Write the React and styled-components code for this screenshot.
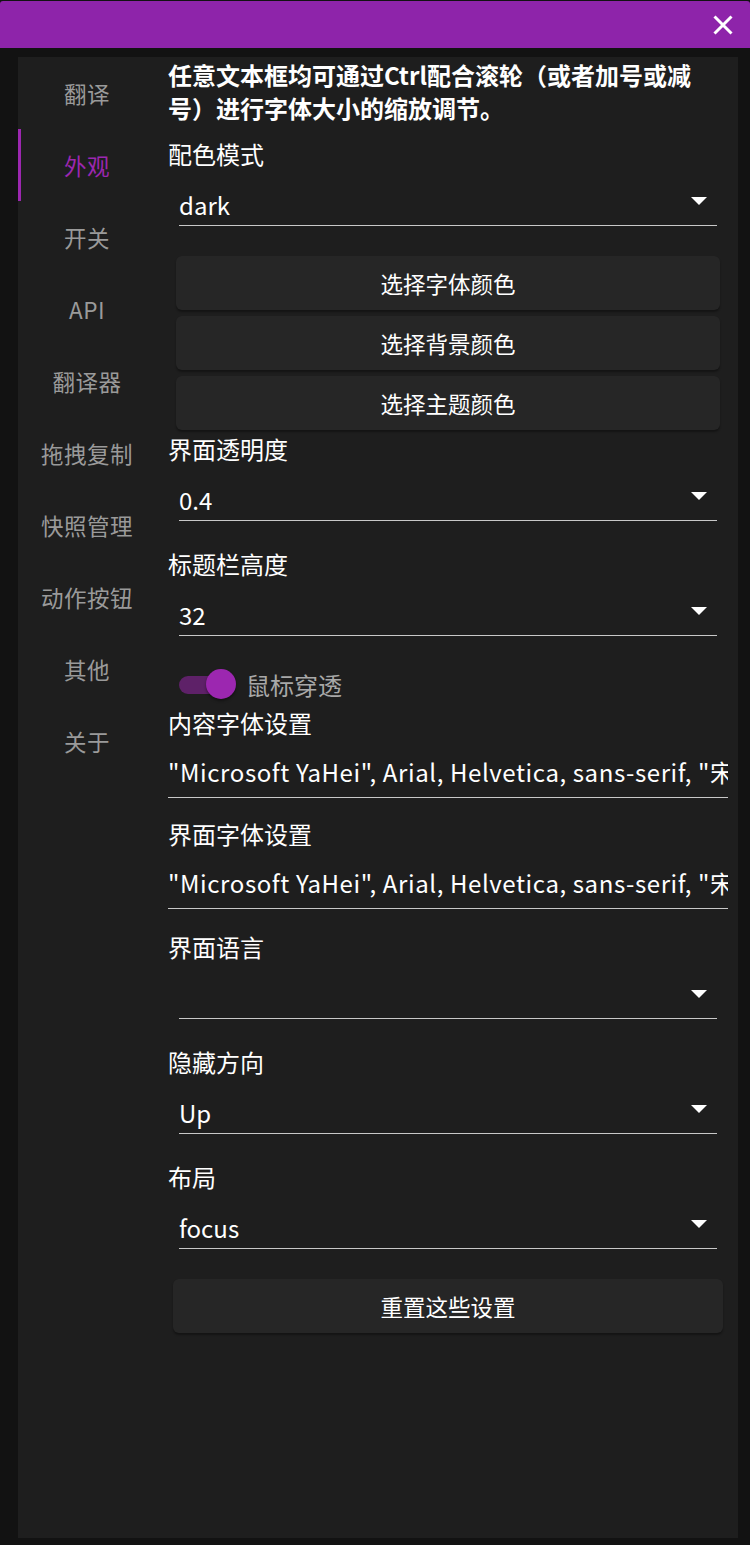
import React from "react"
import styled, { createGlobalStyle } from "styled-components"

const GlobalStyle = createGlobalStyle`
  html, body {
    margin: 0;
    padding: 0;
    background: #121212;
  }
  body {
    font-family: "Noto Sans CJK SC", "Noto Sans", sans-serif;
    color: #fff;
  }
`

const Page = styled.div`
  display: flex;
  flex-direction: column;
  min-height: 100vh;
  box-sizing: border-box;
  padding-bottom: 7px;
`

const TitleBar = styled.div`
  height: 47px;
  margin-top: 1px;
  background: #8e24aa;
  border-radius: 3px 3px 0 0;
  display: flex;
  align-items: center;
  justify-content: flex-end;
  padding-right: 17px;
`

const CloseButton = styled.div`
  width: 20px;
  height: 20px;
  display: flex;
  cursor: pointer;
`

const Panel = styled.div`
  flex: 1;
  display: flex;
  margin: 9px 12px 0 18px;
  background: #1e1e1e;
`

const Sidebar = styled.nav`
  width: 138px;
  flex-shrink: 0;
  display: flex;
  flex-direction: column;
`

const NavItem = styled.div`
  height: 72px;
  display: flex;
  align-items: center;
  justify-content: center;
  font-size: 22.5px;
  letter-spacing: 0.5px;
  color: ${(p) => (p.$active ? "#9c27b0" : "#9a9a9a")};
  border-left: 3px solid ${(p) => (p.$active ? "#9c27b0" : "transparent")};
  padding-right: 3px;
`

const Content = styled.div`
  flex: 1;
  min-width: 0;
  display: flex;
  flex-direction: column;
  padding: 1px 10px 0 12px;
`

const Heading = styled.div`
  font-size: 24px;
  font-weight: 700;
  line-height: 33px;
`

const Label = styled.div`
  font-size: 24px;
  line-height: 36px;
  margin-top: ${(p) => p.$top}px;
`

const Select = styled.div`
  margin: 15px 11px 0;
  display: flex;
  align-items: center;
  justify-content: space-between;
  padding-bottom: 2px;
  border-bottom: 1px solid #c8c8c8;
`

const SelectValue = styled.span`
  font-size: 24px;
  line-height: 36px;
  height: 36px;
`

const Arrow = styled.svg`
  width: 16px;
  height: 8px;
  margin: 0 10px 8px 0;
`

const ButtonStack = styled.div`
  display: flex;
  flex-direction: column;
  gap: 6px;
  margin: 30px ${(p) => p.$inset}px 0;
`

const Button = styled.div`
  height: 54px;
  border-radius: 6px;
  background: #262626;
  box-shadow: 0 2px 2px rgba(0, 0, 0, 0.35);
  display: flex;
  align-items: center;
  justify-content: center;
  font-size: 22.5px;
  color: #fff;
`

const ToggleRow = styled.div`
  display: flex;
  align-items: center;
  height: 36px;
  margin: 30px 0 0 11px;
  gap: 10px;
`

const Switch = styled.div`
  position: relative;
  width: 57px;
  height: 30px;
`

const Track = styled.div`
  position: absolute;
  left: 0;
  top: 7px;
  width: 46px;
  height: 18px;
  border-radius: 9px;
  background: #5e2168;
`

const Knob = styled.div`
  position: absolute;
  left: 27px;
  top: 0;
  width: 30px;
  height: 30px;
  border-radius: 50%;
  background: #9c27b0;
  box-shadow: 0 2px 3px rgba(0, 0, 0, 0.4);
`

const ToggleText = styled.span`
  font-size: 24px;
  color: #a8a8a8;
`

const TextInput = styled.input`
  display: block;
  width: 100%;
  box-sizing: border-box;
  margin: 12px 0 0;
  padding: 0 0 8px;
  border: none;
  border-bottom: 1px solid #c8c8c8;
  background: transparent;
  outline: none;
  color: #fff;
  font-family: "Noto Sans CJK SC", "Noto Sans", sans-serif;
  font-size: 24px;
  letter-spacing: 0.6px;
  line-height: 36px;
  height: 45px;
`

const navItems = ["翻译", "外观", "开关", "API", "翻译器", "拖拽复制", "快照管理", "动作按钮", "其他", "关于"]

const fontStack = `"Microsoft YaHei", Arial, Helvetica, sans-serif, "宋体"`

function DropArrow() {
  return (
    <Arrow viewBox="0 0 16 8">
      <path d="M0 0h16L8 8z" fill="#fff" />
    </Arrow>
  )
}

function SelectField({ value }) {
  return (
    <Select>
      <SelectValue>{value}</SelectValue>
      <DropArrow />
    </Select>
  )
}

export default function App() {
  return (
    <Page>
      <GlobalStyle />
      <TitleBar>
        <CloseButton>
          <svg width="20" height="20" viewBox="0 0 20 20">
            <path d="M1.5 1.5l17 17M18.5 1.5l-17 17" stroke="#fff" strokeWidth="3" />
          </svg>
        </CloseButton>
      </TitleBar>
      <Panel>
        <Sidebar>
          {navItems.map((item, i) => (
            <NavItem key={item} $active={i === 1}>
              {item}
            </NavItem>
          ))}
        </Sidebar>
        <Content>
          <Heading>
            任意文本框均可通过Ctrl配合滚轮（或者加号或减
            <br />
            号）进行字体大小的缩放调节。
          </Heading>
          <Label $top={12}>配色模式</Label>
          <SelectField value="dark" />
          <ButtonStack $inset={8}>
            <Button>选择字体颜色</Button>
            <Button>选择背景颜色</Button>
            <Button>选择主题颜色</Button>
          </ButtonStack>
          <Label $top={1}>界面透明度</Label>
          <SelectField value="0.4" />
          <Label $top={25}>标题栏高度</Label>
          <SelectField value="32" />
          <ToggleRow>
            <Switch>
              <Track />
              <Knob />
            </Switch>
            <ToggleText>鼠标穿透</ToggleText>
          </ToggleRow>
          <Label $top={3}>内容字体设置</Label>
          <TextInput readOnly value={fontStack} />
          <Label $top={18}>界面字体设置</Label>
          <TextInput readOnly value={fontStack} />
          <Label $top={20}>界面语言</Label>
          <SelectField value="" />
          <Label $top={25}>隐藏方向</Label>
          <SelectField value="Up" />
          <Label $top={25}>布局</Label>
          <SelectField value="focus" />
          <ButtonStack $inset={5}>
            <Button>重置这些设置</Button>
          </ButtonStack>
        </Content>
      </Panel>
    </Page>
  )
}
